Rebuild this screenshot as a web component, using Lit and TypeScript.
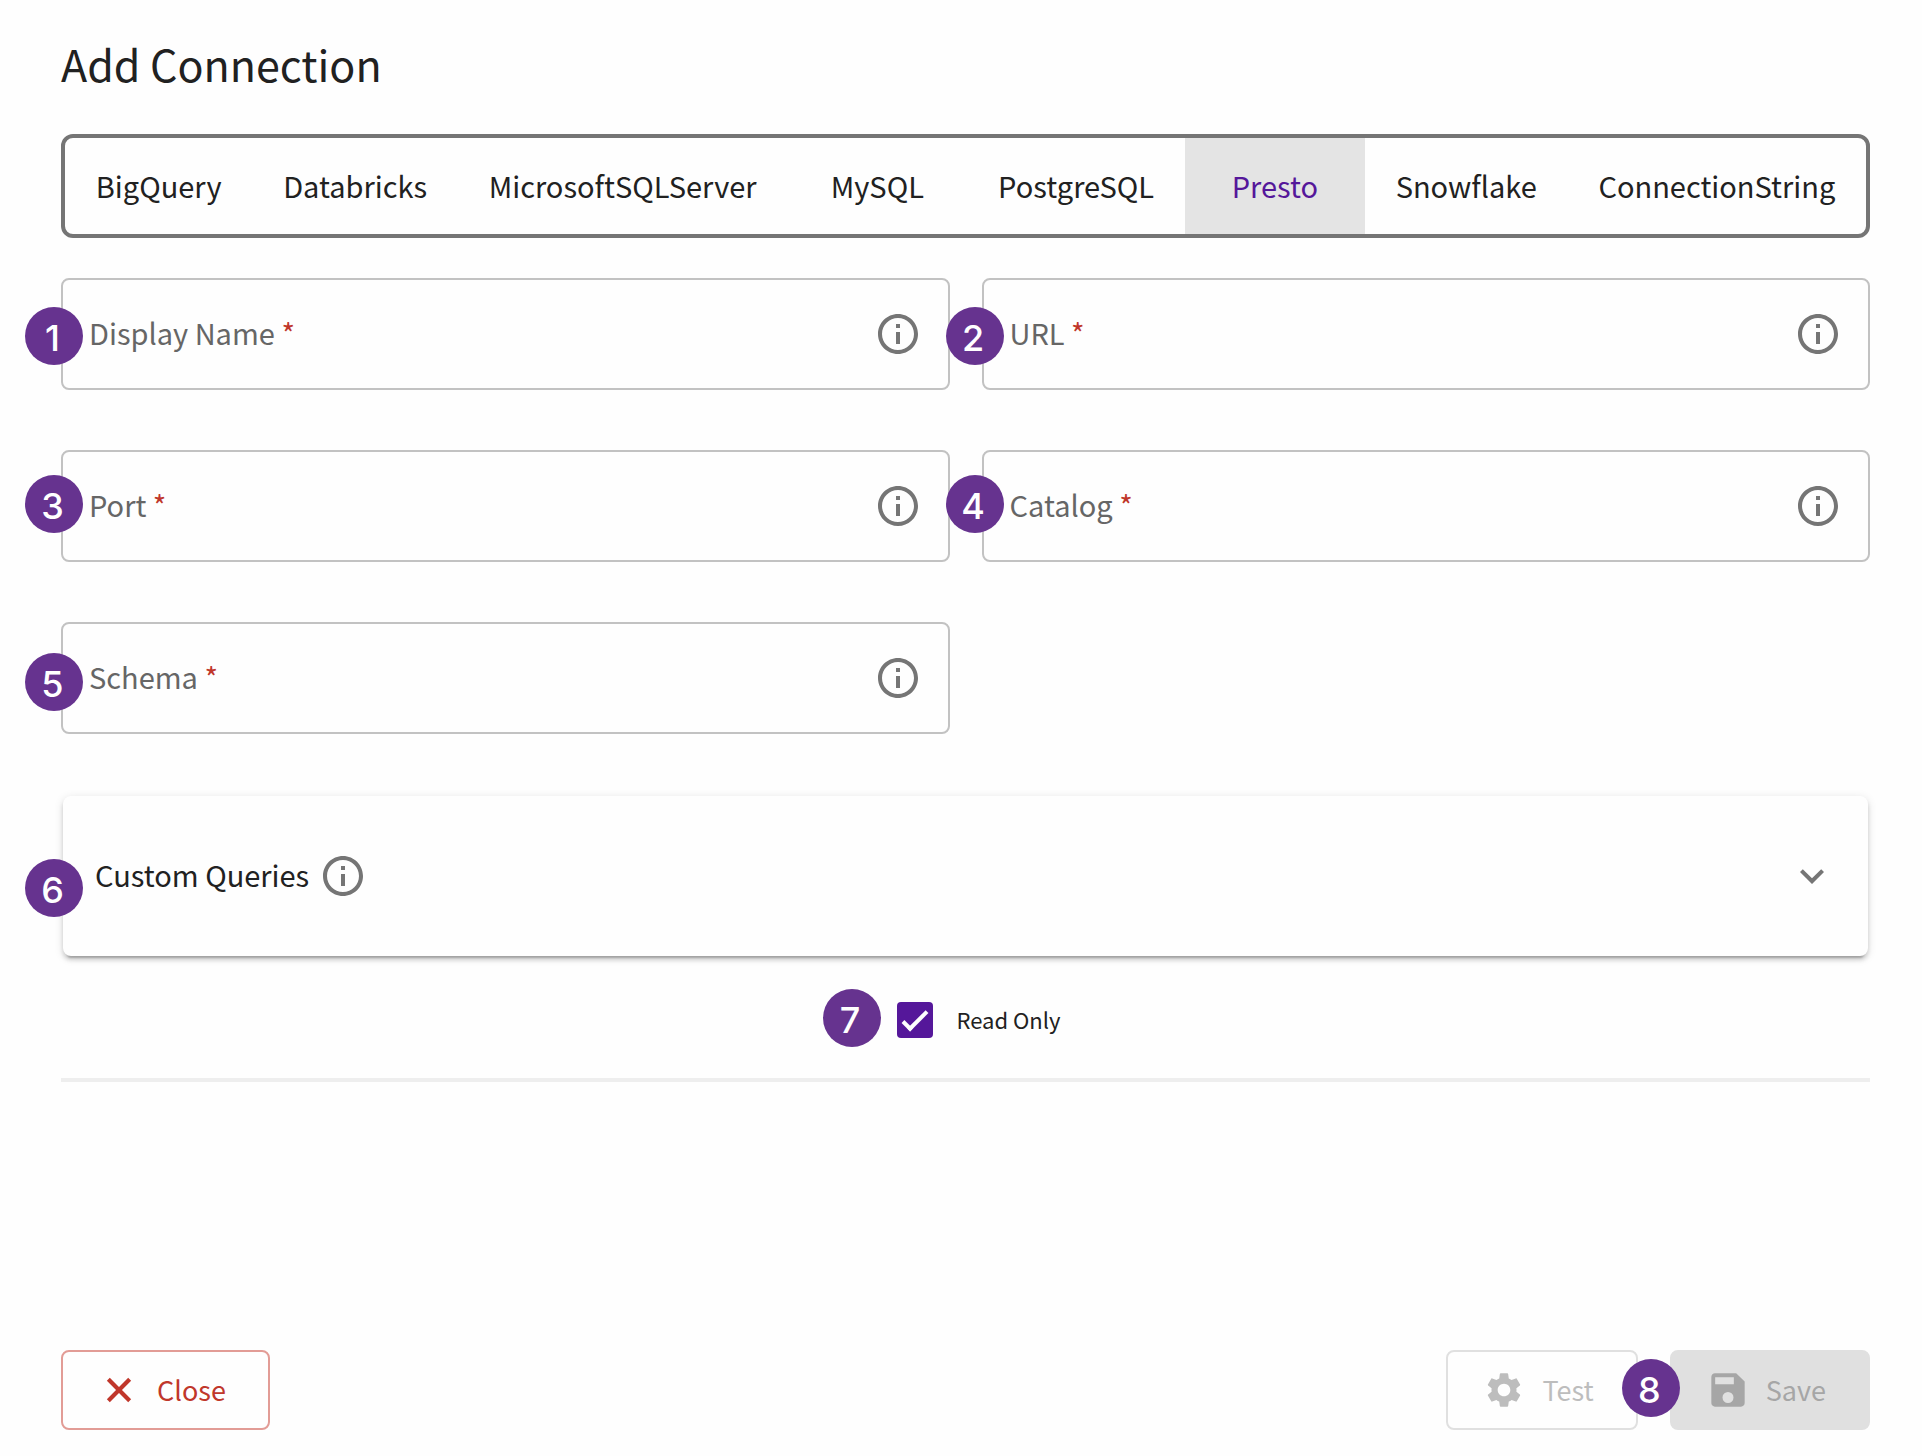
import { LitElement, html, css, svg } from "lit";
import { customElement, property, state } from "lit/decorators.js";
import { classMap } from "lit/directives/class-map.js";

const icons = {
  info: svg`<path d="M11 7h2v2h-2zm0 4h2v6h-2zm1-9C6.48 2 2 6.48 2 12s4.48 10 10 10 10-4.48 10-10S17.52 2 12 2zm0 18c-4.41 0-8-3.59-8-8s3.59-8 8-8 8 3.59 8 8-3.59 8-8 8z"/>`,
  chevron: svg`<path d="M7.41 8.59 12 13.17l4.59-4.58L18 10l-6 6-6-6z"/>`,
  close: svg`<path d="M5.6 5.6 18.4 18.4M18.4 5.6 5.6 18.4" fill="none" stroke="currentColor" stroke-width="2.5"/>`,
  gear: svg`<path d="M19.43 12.98c.04-.32.07-.64.07-.98s-.03-.66-.07-.98l2.11-1.65c.19-.15.24-.42.12-.64l-2-3.46c-.12-.22-.39-.3-.61-.22l-2.49 1c-.52-.4-1.08-.73-1.69-.98l-.38-2.65C14.46 2.18 14.25 2 14 2h-4c-.25 0-.46.18-.49.42l-.38 2.65c-.61.25-1.17.59-1.69.98l-2.49-1c-.23-.09-.49 0-.61.22l-2 3.46c-.13.22-.07.49.12.64l2.11 1.65c-.04.32-.07.65-.07.98s.03.66.07.98l-2.11 1.65c-.19.15-.24.42-.12.64l2 3.46c.12.22.39.3.61.22l2.49-1c.52.4 1.08.73 1.69.98l.38 2.65c.03.24.24.42.49.42h4c.25 0 .46-.18.49-.42l.38-2.65c.61-.25 1.17-.59 1.69-.98l2.49 1c.23.09.49 0 .61-.22l2-3.46c.12-.22.07-.49-.12-.64zM12 15.8c-2.1 0-3.8-1.7-3.8-3.8s1.7-3.8 3.8-3.8 3.8 1.7 3.8 3.8-1.7 3.8-3.8 3.8z"/>`,
  save: svg`<path fill-rule="evenodd" d="M16.9 2H4.200C3 2 2 3 2 4.200v15.600C2 21 3 22 4.200 22h15.600c1.200 0 2.200-1 2.200-2.200V6.900zM12 19.800a3.300 3.300 0 1 1 0-6.600 3.300 3.300 0 0 1 0 6.600zM15.500 8.500H4.300v-4.200h11.200z"/>`,
};

type IconName = keyof typeof icons;

@customElement("app-icon")
export class AppIcon extends LitElement {
  @property() name: IconName = "info";

  static styles = css`
    :host {
      display: block;
      flex: none;
      width: 48px;
      height: 48px;
    }
    .glyph {
      display: block;
      width: 100%;
      height: 100%;
      fill: currentColor;
    }
  `;

  render() {
    return html`<svg class="glyph" viewBox="0 0 24 24" aria-hidden="true">${icons[this.name]}</svg>`;
  }
}

@customElement("step-badge")
export class StepBadge extends LitElement {
  static styles = css`
    :host {
      position: absolute;
      z-index: 1;
      box-sizing: border-box;
      width: 58px;
      height: 58px;
      padding: 4px 3px 0 0;
      border-radius: 50%;
      background: #66338f;
      color: #fff;
      font: 500 36px/54px Inter, "Liberation Sans", sans-serif;
      text-align: center;
      pointer-events: none;
    }
  `;

  render() {
    return html`<slot></slot>`;
  }
}

interface Field {
  id: string;
  label: string;
  level: "low" | "mid" | "high";
}

const connectors = [
  "BigQuery",
  "Databricks",
  "MicrosoftSQLServer",
  "MySQL",
  "PostgreSQL",
  "Presto",
  "Snowflake",
  "ConnectionString",
];

const fields: Field[] = [
  { id: "display-name", label: "Display Name", level: "mid" },
  { id: "url", label: "URL", level: "mid" },
  { id: "port", label: "Port", level: "high" },
  { id: "catalog", label: "Catalog", level: "high" },
  { id: "schema", label: "Schema", level: "low" },
];

@customElement("app-root")
export class AppRoot extends LitElement {
  @state() private connector = "Presto";

  static styles = css`
    :host {
      display: block;
      color: #212121;
      background: #fefefe;
      font: 29px/40px "Noto Sans CJK SC", "Source Sans Pro", sans-serif;
    }
    *,
    *::before {
      box-sizing: border-box;
    }
    button,
    input {
      margin: 0;
      padding: 0;
      border: 0;
      background: none;
      color: inherit;
      font: inherit;
    }
    button {
      cursor: pointer;
    }
    .page {
      display: flex;
      flex-direction: column;
      min-height: 100vh;
      padding: 32px 52px 26px 61px;
    }
    .title {
      margin: 0 0 40px;
      font-size: 43px;
      font-weight: 400;
      line-height: 62px;
    }
    .tabs {
      display: flex;
      height: 104px;
      margin-bottom: 40px;
      overflow: hidden;
      border: 4px solid #757575;
      border-radius: 12px;
    }
    .tab {
      flex: 1 0 auto;
      min-width: 180px;
      padding: 0 30px 2px;
    }
    .tab.selected {
      flex-grow: 0;
      background: #e4e4e4;
      color: #55179a;
    }
    .fields {
      display: grid;
      grid-template-columns: 1fr 1fr;
      gap: 60px 32px;
      margin-bottom: 62px;
    }
    .field {
      position: relative;
      display: flex;
      align-items: center;
      height: 112px;
      padding: 0 26px;
      border: 2px solid #c2c2c2;
      border-radius: 8px;
    }
    .label {
      padding-bottom: 4px;
      color: #666;
    }
    .required {
      color: #c0372b;
    }
    .entry {
      flex: 1;
      min-width: 0;
      height: 100%;
      padding-left: 12px;
      outline: 0;
    }
    .hint {
      color: #757575;
    }
    .beside {
      left: -38px;
    }
    .high {
      top: 23px;
    }
    .mid {
      top: 27px;
    }
    .low {
      top: 29px;
    }
    .panel {
      position: relative;
      display: flex;
      align-items: center;
      gap: 10px;
      height: 160px;
      margin: 0 2px;
      padding: 0 32px;
      border-radius: 8px;
      background: #fefefe;
      box-shadow:
        0 6px 2px -4px rgba(0, 0, 0, 0.2),
        0 4px 4px rgba(0, 0, 0, 0.14),
        0 2px 10px rgba(0, 0, 0, 0.12);
    }
    .panel-title {
      padding-bottom: 4px;
    }
    .panel-badge {
      top: 63px;
      left: -38px;
    }
    .toggle {
      margin-left: auto;
      color: #757575;
    }
    .readonly {
      display: flex;
      justify-content: center;
      padding: 44px 0 38px 26px;
      border-bottom: 4px solid #eee;
    }
    .check {
      position: relative;
      display: flex;
      align-items: center;
      gap: 24px;
      font-size: 22px;
    }
    .check-label {
      padding-bottom: 2px;
      line-height: 38px;
    }
    .box {
      appearance: none;
      display: grid;
      place-items: center;
      width: 36px;
      height: 36px;
      border-radius: 4px;
      background: #55179a;
    }
    .box:checked::before {
      content: "";
      width: 26px;
      height: 12px;
      border: solid #fefefe;
      border-width: 0 0 4px 4px;
      transform: translateY(-2px) rotate(-45deg);
    }
    .check-badge {
      top: -11px;
      left: -74px;
    }
    .actions {
      display: flex;
      gap: 32px;
      margin-top: auto;
    }
    .action {
      display: flex;
      align-items: center;
      gap: 18px;
      height: 80px;
      padding: 0 42px 0 36px;
      border: 2px solid #e0e0e0;
      border-radius: 8px;
      color: #bdbdbd;
      font-size: 27px;
    }
    .action app-icon {
      width: 40px;
      height: 40px;
    }
    .close {
      margin-right: auto;
      border-color: #e29c96;
      color: #c0372b;
    }
    .save-wrap {
      position: relative;
    }
    .save {
      background: #e0e0e0;
      color: #a6a6a6;
    }
    .save-badge {
      top: 9px;
      left: -48px;
    }
  `;

  private renderField(field: Field, index: number) {
    return html`
      <div class="field">
        <step-badge class="beside ${field.level}">${index + 1}</step-badge>
        <label class="label" for=${field.id}>${field.label} <span class="required">*</span></label>
        <input class="entry" id=${field.id} type="text" required />
        <button class="hint" type="button" aria-label="About ${field.label}">
          <app-icon name="info"></app-icon>
        </button>
      </div>
    `;
  }

  render() {
    return html`
      <main class="page">
        <h1 class="title">Add Connection</h1>
        <div class="tabs" role="tablist">
          ${connectors.map(
            (name) => html`
              <button
                class=${classMap({ tab: true, selected: name === this.connector })}
                type="button"
                role="tab"
                aria-selected=${name === this.connector ? "true" : "false"}
                @click=${() => (this.connector = name)}
              >${name}</button>
            `,
          )}
        </div>
        <section class="fields">${fields.map((field, i) => this.renderField(field, i))}</section>
        <section class="panel">
          <step-badge class="panel-badge">6</step-badge>
          <span class="panel-title">Custom Queries</span>
          <button class="hint" type="button" aria-label="About custom queries">
            <app-icon name="info"></app-icon>
          </button>
          <button class="toggle" type="button" aria-label="Expand custom queries">
            <app-icon name="chevron"></app-icon>
          </button>
        </section>
        <div class="readonly">
          <div class="check">
            <step-badge class="check-badge">7</step-badge>
            <input class="box" id="read-only" type="checkbox" checked />
            <label class="check-label" for="read-only">Read Only</label>
          </div>
        </div>
        <footer class="actions">
          <button class="action close" type="button"><app-icon name="close"></app-icon>Close</button>
          <button class="action" type="button" disabled><app-icon name="gear"></app-icon>Test</button>
          <div class="save-wrap">
            <step-badge class="save-badge">8</step-badge>
            <button class="action save" type="button" disabled><app-icon name="save"></app-icon>Save</button>
          </div>
        </footer>
      </main>
    `;
  }
}
